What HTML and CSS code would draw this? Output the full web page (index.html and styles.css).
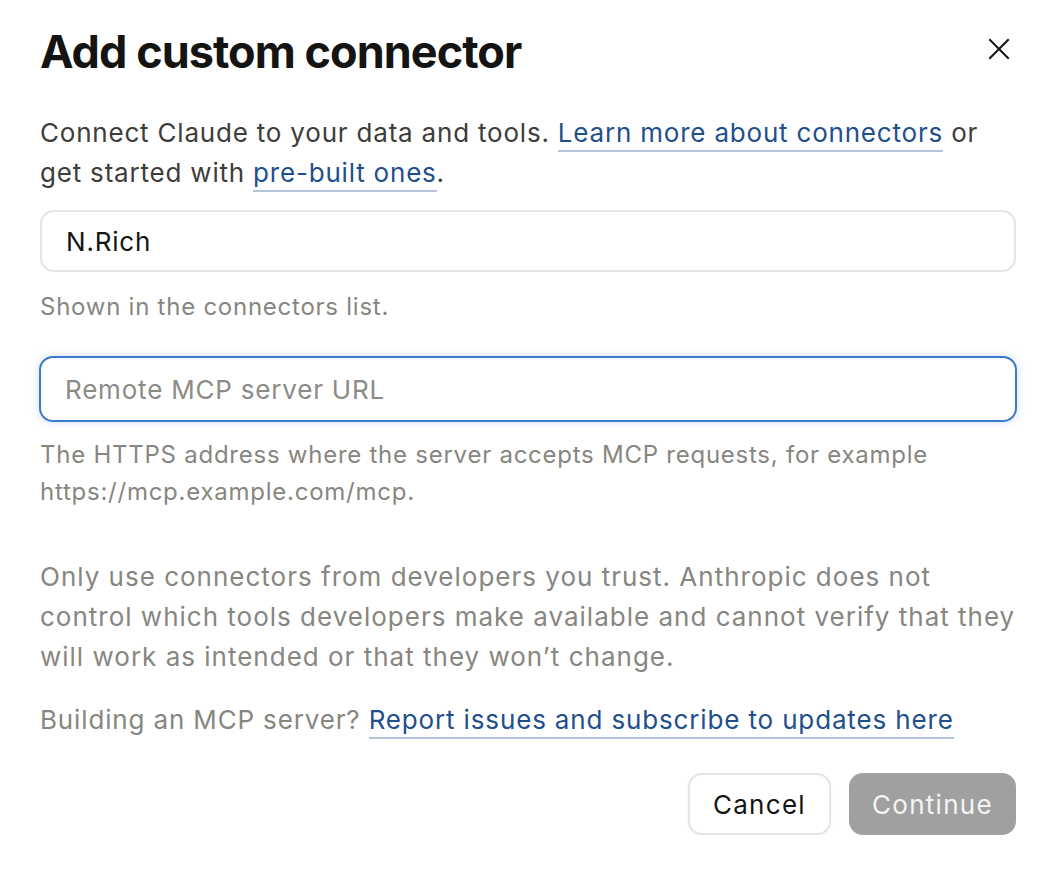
FILE: index.html
```html
<!DOCTYPE html>
<html lang="en">
<head>
  <meta charset="UTF-8" />
  <meta name="viewport" content="width=device-width, initial-scale=1" />
  <title>Add custom connector</title>
  <link rel="stylesheet" href="styles.css">
</head>
<body>
  <div class="dialog">
    <div class="dialog-header">
      <h1>Add custom connector</h1>
      <button class="close-button" title="Close">
        <svg width="22" height="22" viewBox="0 0 22 22" fill="none" stroke="#141413" stroke-width="2" stroke-linecap="square">
          <path d="M2 2 L20 20 M20 2 L2 20" />
        </svg>
      </button>
    </div>

    <p class="intro">
      Connect Claude to your data and tools. <a href="#">Learn more about connectors</a> or
      get started with <a href="#">pre-built ones</a>.
    </p>

    <div class="field">
      <input class="text-input" type="text" value="N.Rich" />
      <div class="hint">Shown in the connectors list.</div>
    </div>

    <div class="field">
      <input class="text-input focused" type="text" placeholder="Remote MCP server URL" />
      <div class="hint">The HTTPS address where the server accepts MCP requests, for example https://mcp.example.com/mcp.</div>
    </div>

    <p class="notice">
      Only use connectors from developers you trust. Anthropic does not
      control which tools developers make available and cannot verify that they
      will work as intended or that they won’t change.
    </p>

    <p class="notice building">
      Building an MCP server? <a href="#">Report issues and subscribe to updates here</a>
    </p>

    <div class="actions">
      <button class="cancel-button">Cancel</button>
      <button class="continue-button" disabled>Continue</button>
    </div>
  </div>
</body>
</html>
```

FILE: styles.css
```css
body {
  margin: 0;
  padding: 0;
  background: #ffffff;
  font-family: 'Inter', 'Noto Sans', sans-serif;
  color: #141413;
}

.dialog {
  width: 976px;
  padding: 24px 40px 0 40px;
}

.dialog-header {
  display: flex;
  align-items: center;
  justify-content: space-between;
}

h1 {
  margin: 0;
  font-size: 45px;
  font-weight: 700;
  letter-spacing: -0.95px;
  line-height: 56px;
}

.close-button {
  background: none;
  border: none;
  padding: 0;
  width: 22px;
  height: 22px;
  margin-right: 6px;
  margin-top: -6px;
  cursor: pointer;
}

.intro {
  margin: 33px 0 0 0;
  font-size: 26px;
  letter-spacing: 0.8px;
  line-height: 40px;
  color: #3d3d3a;
}

a {
  color: #1f4f8c;
  text-decoration: none;
  border-bottom: 2px solid #b3c4da;
  padding-bottom: 2px;
}

.field {
  margin-top: 17px;
}

.field + .field {
  margin-top: 31px;
}

.text-input {
  display: block;
  box-sizing: border-box;
  width: 976px;
  height: 62px;
  padding: 0 24px;
  border: 2px solid #e6e5e1;
  border-radius: 14px;
  font-family: 'Inter', 'Noto Sans', sans-serif;
  font-size: 26px;
  letter-spacing: 0.8px;
  color: #141413;
  outline: none;
}

.text-input.focused {
  width: 978px;
  height: 66px;
  margin-left: -1px;
  border-color: #3d7acb;
  box-shadow: 0 0 8px rgba(61, 122, 203, 0.25);
}

.text-input::placeholder {
  color: #8c8b86;
}

.hint {
  margin-top: 16px;
  font-size: 24px;
  letter-spacing: 0.75px;
  line-height: 37px;
  color: #87867f;
}

.focused + .hint {
  margin-top: 14px;
}

.notice {
  margin: 0;
  font-size: 26px;
  letter-spacing: 1px;
  line-height: 40px;
  color: #87867f;
}

.field + .notice {
  margin-top: 47px;
}

.notice.building {
  margin-top: 23px;
  letter-spacing: 0.85px;
}

.actions {
  display: flex;
  justify-content: flex-end;
  gap: 18px;
  margin-top: 33px;
}

.cancel-button,
.continue-button {
  height: 62px;
  border-radius: 14px;
  font-family: 'Inter', 'Noto Sans', sans-serif;
  font-size: 26px;
  letter-spacing: 1.3px;
  padding: 0 23px;
}

.cancel-button {
  background: #ffffff;
  border: 2px solid #e6e5e1;
  color: #141413;
  box-shadow: 0 1px 3px rgba(0, 0, 0, 0.05);
}

.continue-button {
  background: #a0a0a0;
  border: none;
  color: #f4f4f2;
}
```
